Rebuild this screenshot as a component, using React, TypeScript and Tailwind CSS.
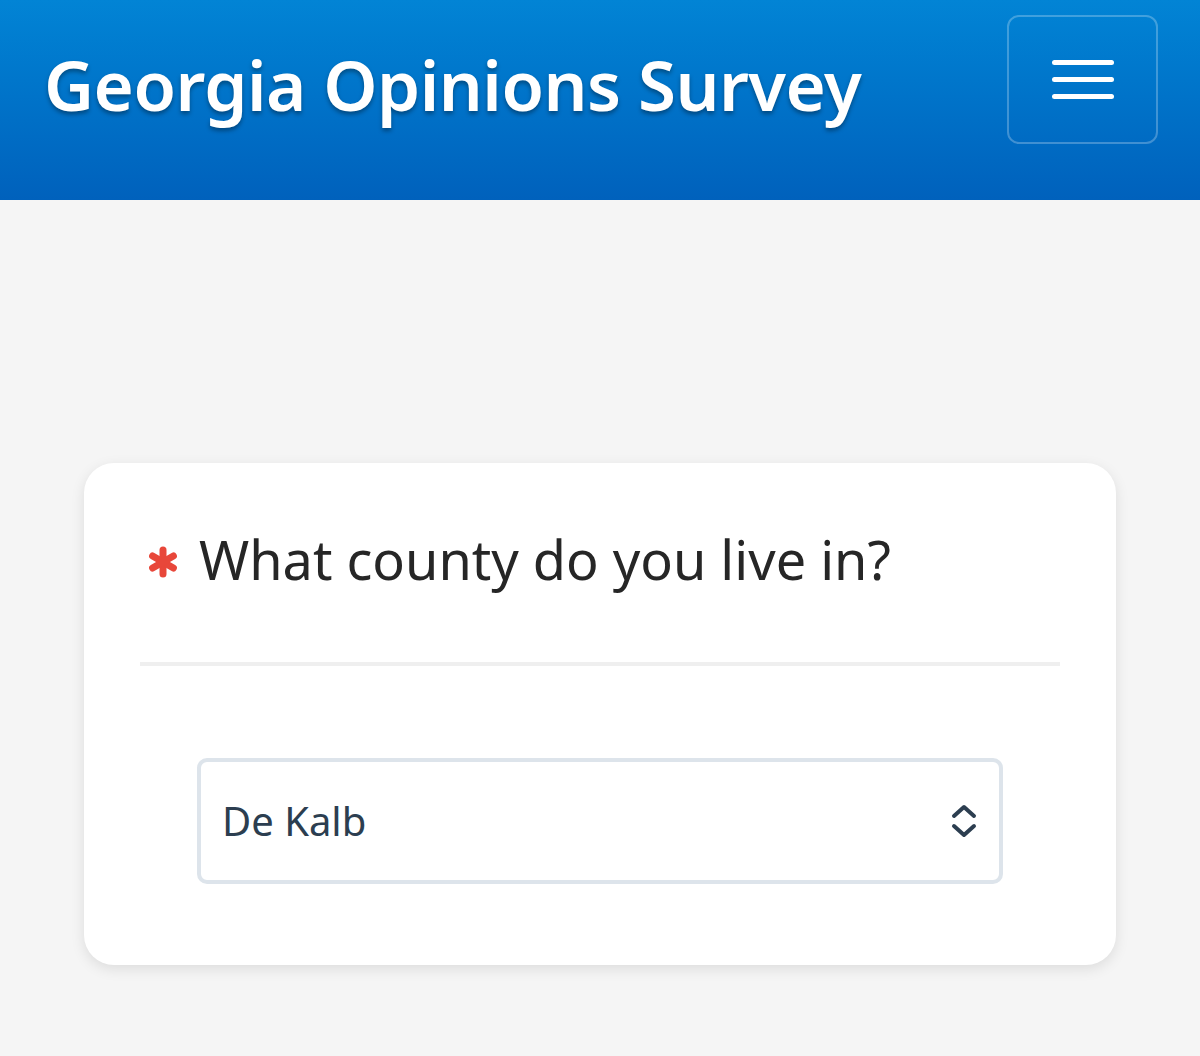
import { useState } from 'react'

export default function App() {
  const [county, setCounty] = useState('De Kalb')

  return (
    <div className="min-h-[1056px] bg-[#f5f5f5]" style={{ fontFamily: '"Noto Sans", "Open Sans", sans-serif' }}>
      {/* Header */}
      <header className="h-[200px] bg-gradient-to-b from-[#0284d5] to-[#0061bc] flex items-start justify-between pl-[44px] pr-[42px]">
        <h1 className="mt-[44px] text-[69px] leading-[80px] font-semibold text-white tracking-[-0.5px] [text-shadow:0_3px_4px_rgba(0,0,0,0.35)]">
          Georgia Opinions Survey
        </h1>
        <button className="mt-[15px] w-[151px] h-[129px] rounded-[12px] border-2 border-white/25 flex flex-col items-center justify-center gap-[12px]">
          <span className="block w-[62px] h-[5px] rounded-full bg-white" />
          <span className="block w-[62px] h-[5px] rounded-full bg-white" />
          <span className="block w-[62px] h-[5px] rounded-full bg-white" />
        </button>
      </header>

      {/* Question card */}
      <main className="pt-[263px] px-[84px]">
        <div className="bg-white rounded-[30px] shadow-[0_4px_14px_rgba(0,0,0,0.10)] h-[502px] pt-[60px] px-[56px]">
          <div className="flex items-center gap-[20px] pl-[7px]">
            <svg className="mt-[6px]" width="32" height="32" viewBox="0 0 32 32" fill="none">
              <g stroke="#e8473a" strokeWidth="7" strokeLinecap="round">
                <path d="M16 4 L16 28" />
                <path d="M5.6 10 L26.4 22" />
                <path d="M5.6 22 L26.4 10" />
              </g>
            </svg>
            <h2 className="text-[54px] leading-[72px] text-[#262626] font-normal">What county do you live in?</h2>
          </div>
          <div className="mt-[67px] h-[4px] bg-[#efefef]" />
          <div className="mt-[92px] px-[57px]">
            <div className="relative h-[126px] rounded-[10px] border-4 border-[#dde4eb] flex items-center pl-[21px] pr-[20px]">
              <select
                value={county}
                onChange={e => setCounty(e.target.value)}
                className="appearance-none w-full bg-transparent text-[40px] text-[#2c3e50] outline-none"
              >
                <option>Appling</option>
                <option>Cobb</option>
                <option>De Kalb</option>
                <option>Fulton</option>
                <option>Gwinnett</option>
              </select>
              <svg className="absolute right-[20px] top-1/2 -translate-y-1/2 pointer-events-none" width="30" height="34" viewBox="0 0 30 34" fill="none">
                <path d="M5 12 L15 3 L25 12" stroke="#2c3e50" strokeWidth="4" strokeLinecap="round" strokeLinejoin="round" />
                <path d="M5 22 L15 31 L25 22" stroke="#2c3e50" strokeWidth="4" strokeLinecap="round" strokeLinejoin="round" />
              </svg>
            </div>
          </div>
        </div>
      </main>
    </div>
  )
}
